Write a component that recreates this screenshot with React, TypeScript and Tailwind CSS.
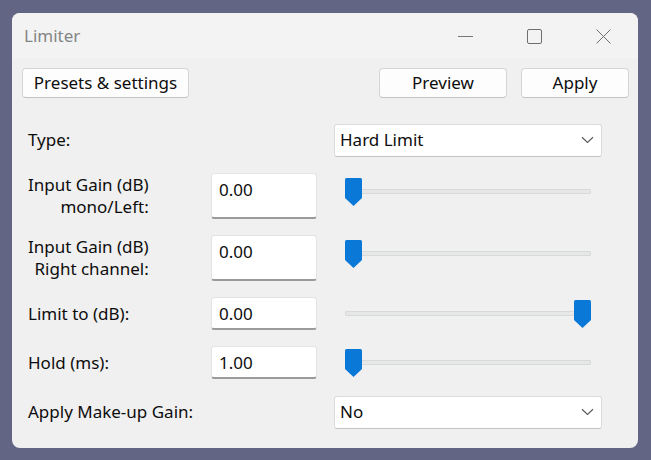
import React from "react";

const font = { fontFamily: '"Noto Sans", "Open Sans", sans-serif' };

function Chevron() {
  return (
    <svg width="13" height="8" viewBox="0 0 13 8" fill="none">
      <path d="M1 1.2 L6.5 6.5 L12 1.2" stroke="#5c5c5c" strokeWidth="1.2" />
    </svg>
  );
}

function Slider({ value }: { value: "min" | "max" }) {
  return (
    <div className="relative h-[28px] w-[246px]">
      <div className="absolute left-0 right-0 top-[11px] h-[5px] rounded-[1px] border border-[#d8d9d9] bg-[#e6e7e7]" />
      <svg
        className={`absolute top-0 ${value === "min" ? "left-0" : "right-0"}`}
        width="17"
        height="28"
        viewBox="0 0 17 28"
      >
        <path d="M1.5 0 H15.5 Q17 0 17 1.5 V20 L8.5 28 L0 20 V1.5 Q0 0 1.5 0 Z" fill="#0a78d7" />
      </svg>
    </div>
  );
}

function NumberBox({ value, tall }: { value: string; tall?: boolean }) {
  return (
    <div
      className={`w-[106px] ${tall ? "h-[46px]" : "h-[33px]"} rounded-[3px] border border-[#e4e4e4] border-b-2 border-b-[#9b9b9b] bg-white px-[7px] text-[17px] leading-[31px] text-[#0d0d0d]`}
    >
      {value}
    </div>
  );
}

function Dropdown({ value }: { value: string }) {
  return (
    <div className="ml-[123px] flex h-[33px] w-[268px] items-center justify-between rounded-[3px] border border-[#dcdcdc] border-b-[#c4c4c4] bg-white pl-[5px] pr-[7px] text-[17px] text-[#0d0d0d]">
      <span>{value}</span>
      <Chevron />
    </div>
  );
}

function WinButton({ label, width }: { label: string; width: string }) {
  return (
    <button
      className={`${width} h-[30px] rounded-[4px] border border-[#d5d5d5] border-b-[#c2c2c2] bg-[#fdfdfd] text-[17px] leading-[28px] text-[#0d0d0d]`}
    >
      {label}
    </button>
  );
}

function TwoLineLabel({ first, second }: { first: string; second: string }) {
  return (
    <div className="flex h-full w-[183px] items-center">
      <div className="inline-flex flex-col items-end whitespace-nowrap leading-[22px]">
        <span>{first}</span>
        <span>{second}</span>
      </div>
    </div>
  );
}

export default function App() {
  return (
    <div className="h-[460px] w-[651px] bg-[#636584] pl-[12px] pt-[13px]" style={font}>
      <div className="flex h-[435px] w-[626px] flex-col overflow-hidden rounded-[8px] bg-[#f0f0f0]">
        {/* title bar */}
        <div className="flex h-[46px] shrink-0 items-center bg-[#f3f3f3]">
          <span className="flex-1 pl-[12px] text-[17px] text-[#858585]">Limiter</span>
          <div className="flex h-full w-[69px] items-center justify-center">
            <div className="h-px w-[15px] bg-[#777]" />
          </div>
          <div className="flex h-full w-[69px] items-center justify-center">
            <div className="h-[15px] w-[15px] rounded-[2px] border border-[#6e6e6e]" />
          </div>
          <div className="flex h-full w-[69px] items-center justify-center">
            <svg width="15" height="15" viewBox="0 0 15 15">
              <path d="M0.5 0.5 L14.5 14.5 M14.5 0.5 L0.5 14.5" stroke="#6e6e6e" strokeWidth="1" />
            </svg>
          </div>
        </div>

        {/* body */}
        <div className="flex flex-col pl-[10px] pr-[9px] pt-[9px]">
          <div className="flex items-center justify-between">
            <WinButton label="Presets & settings" width="w-[167px]" />
            <div className="flex gap-[14px]">
              <WinButton label="Preview" width="w-[128px]" />
              <WinButton label="Apply" width="w-[108px]" />
            </div>
          </div>

          <div className="mt-[26px] flex flex-col gap-[16.5px] pl-[6px] text-[17px] text-[#0d0d0d]">
            <div className="flex h-[32px] items-center">
              <div className="w-[183px]">Type:</div>
              <Dropdown value="Hard Limit" />
            </div>

            <div className="flex h-[46px] items-start">
              <TwoLineLabel first="Input Gain (dB)" second="mono/Left:" />
              <NumberBox value="0.00" tall />
              <div className="ml-[28px] mt-[5px]">
                <Slider value="min" />
              </div>
            </div>

            <div className="flex h-[46px] items-start">
              <TwoLineLabel first="Input Gain (dB)" second="Right channel:" />
              <NumberBox value="0.00" tall />
              <div className="ml-[28px] mt-[5px]">
                <Slider value="min" />
              </div>
            </div>

            <div className="flex h-[32px] items-center">
              <div className="w-[183px]">Limit to (dB):</div>
              <NumberBox value="0.00" />
              <div className="ml-[28px]">
                <Slider value="max" />
              </div>
            </div>

            <div className="flex h-[33px] items-center">
              <div className="w-[183px]">Hold (ms):</div>
              <NumberBox value="1.00" />
              <div className="ml-[28px]">
                <Slider value="min" />
              </div>
            </div>

            <div className="flex h-[33px] items-center">
              <div className="w-[183px]">Apply Make-up Gain:</div>
              <Dropdown value="No" />
            </div>
          </div>
        </div>
      </div>
    </div>
  );
}
